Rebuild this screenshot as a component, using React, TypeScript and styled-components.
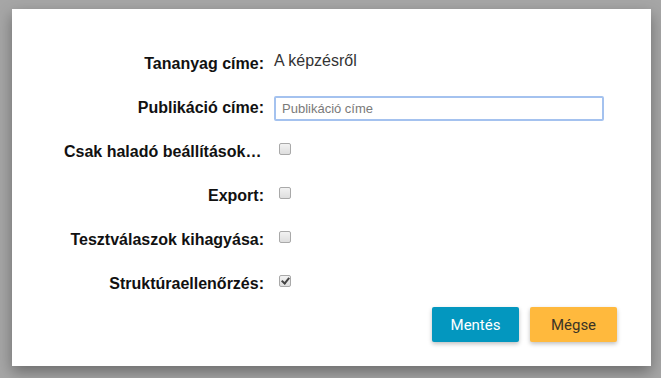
import React from "react";
import styled, { createGlobalStyle } from "styled-components";

const GlobalStyle = createGlobalStyle`
  html, body {
    margin: 0;
    padding: 0;
    background: #a6a6a6;
    font-family: "Liberation Sans", Arial, sans-serif;
  }
`;

const Page = styled.div`
  width: 661px;
  height: 378px;
  box-sizing: border-box;
  padding: 9px 10px 0 12px;
  background: #a6a6a6;
`;

const Dialog = styled.div`
  width: 639px;
  height: 357px;
  box-sizing: border-box;
  background: #fff;
  box-shadow: 0 6px 14px rgba(0, 0, 0, 0.35);
  padding: 33px 34px 0 52px;
  display: flex;
  flex-direction: column;
`;

const Form = styled.div`
  display: grid;
  grid-template-columns: 200px 1fr;
  grid-auto-rows: 44px;
  column-gap: 10px;
  align-items: center;
`;

const Label = styled.label`
  font-size: 16px;
  font-weight: bold;
  color: #111;
  text-align: right;
  white-space: nowrap;
  overflow: hidden;
  text-overflow: ellipsis;
`;

const Value = styled.div`
  display: flex;
  align-items: center;
`;

const StaticText = styled.span`
  font-size: 16px;
  color: #333;
  position: relative;
  top: -3px;
`;

const TextInput = styled.input`
  width: 330px;
  height: 25px;
  box-sizing: border-box;
  border: 2px solid #a4c2ef;
  border-radius: 2px;
  padding: 0 6px;
  font-family: "Liberation Sans", Arial, sans-serif;
  font-size: 13px;
  color: #333;
  outline: none;
  &::placeholder {
    color: #7a7a7a;
  }
`;

const Check = styled.input`
  appearance: none;
  width: 12px;
  height: 12px;
  margin: 0 0 0 5px;
  box-sizing: border-box;
  border: 1px solid #a9a9a9;
  border-radius: 2px;
  background: linear-gradient(#f2f2f2, #dedede);
  position: relative;
  top: -3px;
  &:checked::after {
    content: "";
    position: absolute;
    left: 3px;
    top: 0px;
    width: 3px;
    height: 6px;
    border: solid #444;
    border-width: 0 2px 2px 0;
    transform: rotate(40deg);
  }
`;

const Footer = styled.div`
  display: flex;
  justify-content: flex-end;
  gap: 11px;
  margin-top: 1px;
`;

const Button = styled.button<{ $variant: "primary" | "warning" }>`
  width: 87px;
  height: 35px;
  border: none;
  border-radius: 2px;
  font-family: Roboto, "Liberation Sans", sans-serif;
  font-size: 15px;
  cursor: pointer;
  background: ${(p) => (p.$variant === "primary" ? "#0397bf" : "#ffb93d")};
  color: ${(p) => (p.$variant === "primary" ? "#fff" : "#3a3325")};
  box-shadow: 0 2px 4px rgba(0, 0, 0, 0.25);
`;

const rows: { label: string; checked?: boolean }[] = [
  { label: "Csak haladó beállításokkal" },
  { label: "Export:" },
  { label: "Tesztválaszok kihagyása:" },
  { label: "Struktúraellenőrzés:", checked: true },
];

export default function App() {
  return (
    <Page>
      <GlobalStyle />
      <Dialog>
        <Form>
          <Label>Tananyag címe:</Label>
          <Value>
            <StaticText>A képzésről</StaticText>
          </Value>
          <Label>Publikáció címe:</Label>
          <Value>
            <TextInput placeholder="Publikáció címe" autoFocus />
          </Value>
          {rows.map((r) => (
            <React.Fragment key={r.label}>
              <Label>{r.label}</Label>
              <Value>
                <Check type="checkbox" defaultChecked={r.checked} />
              </Value>
            </React.Fragment>
          ))}
        </Form>
        <Footer>
          <Button $variant="primary">Mentés</Button>
          <Button $variant="warning">Mégse</Button>
        </Footer>
      </Dialog>
    </Page>
  );
}
